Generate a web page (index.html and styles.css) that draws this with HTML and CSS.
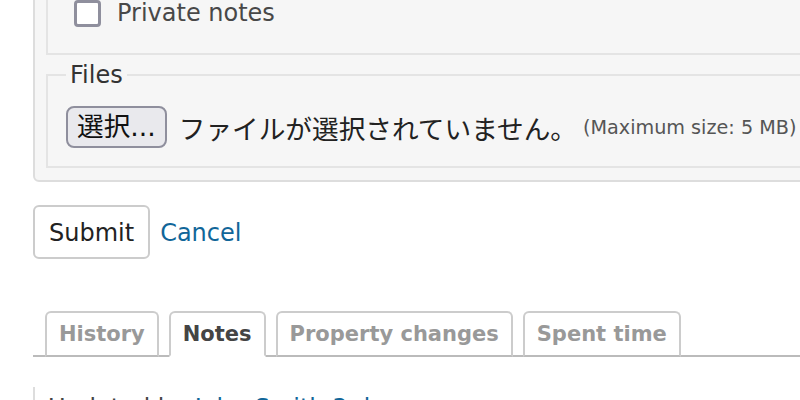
FILE: index.html
```html
<!DOCTYPE html>
<html lang="ja">
<head>
    <meta charset="UTF-8">
    <meta name="viewport" content="width=device-width, initial-scale=1.0">
    <title>Issue note</title>
    <link rel="stylesheet" href="styles.css">
</head>
<body>
    <div class="page">
        <!-- note form -->
        <div class="box">
            <fieldset class="notes-set">
                <label class="check-row">
                    <span class="checkbox"></span>
                    <span>Private notes</span>
                </label>
            </fieldset>
            <fieldset class="files-set">
                <legend>Files</legend>
                <div class="file-row">
                    <span class="file-button">選択...</span>
                    <span class="file-label">ファイルが選択されていません。</span>
                    <span class="max-size">(Maximum size: 5 MB)</span>
                </div>
            </fieldset>
        </div>
        <div class="actions">
            <button class="submit">Submit</button>
            <a href="#" class="link">Cancel</a>
        </div>
        <!-- history tabs -->
        <div class="tabs">
            <ul>
                <li><a href="#">History</a></li>
                <li class="selected"><a href="#">Notes</a></li>
                <li><a href="#">Property changes</a></li>
                <li><a href="#">Spent time</a></li>
            </ul>
        </div>
        <div class="journal">
            <h4>Updated by <a href="#" class="link">John Smith</a> <a href="#" class="link">3 days ago</a></h4>
        </div>
    </div>
</body>
</html>
```

FILE: styles.css
```css
/* 基本 */
body, html {
    margin: 0;
    padding: 0;
    height: 100%;
    overflow: hidden;
    background: #fff;
    font-family: "DejaVu Sans", "Noto Sans CJK JP", sans-serif;
    font-size: 24px;
    color: #333;
}
.page {
    width: 1100px;
    padding-left: 33px;
}
/* フォームの箱 */
.box {
    margin-top: -40px;
    padding: 12px 11px;
    background: #f6f6f6;
    border: 2px solid #ddd;
    border-radius: 6px;
}
fieldset {
    margin: 0;
    border: 2px solid #e4e4e4;
    min-width: 0;
}
.notes-set {
    padding: 23px 26px 26px;
}
.check-row {
    display: flex;
    align-items: center;
    gap: 16px;
    height: 28px;
    line-height: 28px;
    color: #484848;
}
.checkbox {
    width: 21px;
    height: 21px;
    border: 3px solid #8f8f9d;
    border-radius: 4px;
    background: #fff;
}
.files-set {
    margin-top: 5px;
    padding: 16px 18px 18px;
}
.files-set legend {
    padding: 0 4px;
    line-height: 30px;
    color: #333;
}
.file-row {
    display: flex;
    align-items: center;
    height: 42px;
    white-space: nowrap;
}
.file-button {
    box-sizing: border-box;
    height: 42px;
    padding: 0 9px;
    line-height: 38px;
    font-size: 26.67px;
    color: #111;
    background: #e9e9ed;
    border: 2px solid #8f8f9d;
    border-radius: 8px;
}
.file-label {
    margin-left: 12px;
    font-size: 26.67px;
    color: #222;
}
.max-size {
    margin-left: 6px;
    font-size: 19.2px;
    color: #555;
}
/* ボタン */
.actions {
    display: flex;
    align-items: baseline;
    gap: 10px;
    margin-top: 23px;
}
.submit {
    padding: 12px 14px 10px;
    line-height: 28px;
    font-family: inherit;
    font-size: 24px;
    color: #222;
    background: #fff;
    border: 2px solid #ccc;
    border-radius: 6px;
}
.link {
    color: #169;
    text-decoration: none;
}
/* タブ */
.tabs ul {
    display: flex;
    gap: 10px;
    margin: 52px 0 0;
    padding: 0 0 0 12px;
    list-style: none;
    border-bottom: 2px solid #bbb;
}
.tabs li {
    margin-bottom: -2px;
}
.tabs a {
    display: block;
    padding: 8px 12px;
    line-height: 26px;
    font-size: 21px;
    font-weight: bold;
    color: #999;
    text-decoration: none;
    background: #fff;
    border: 2px solid #ccc;
    border-bottom-color: #bbb;
    border-radius: 6px 6px 0 0;
}
.tabs .selected a {
    color: #444;
    border-bottom-color: #fff;
}
/* 履歴 */
.journal {
    margin-top: 30px;
    padding: 7px 0 0 13px;
    border-left: 2px solid #ddd;
}
.journal h4 {
    margin: 0;
    font-size: 24px;
    font-weight: normal;
    line-height: 28px;
    color: #444;
    white-space: nowrap;
}
```
